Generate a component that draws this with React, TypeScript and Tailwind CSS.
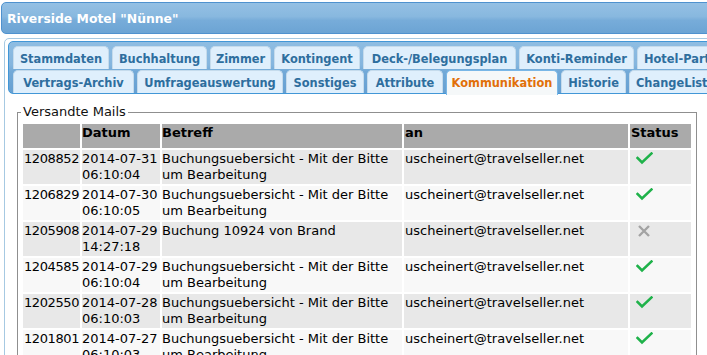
import React from 'react'

const row1 = [
  { label: 'Stammdaten', w: 'w-[96px]' },
  { label: 'Buchhaltung', w: 'w-[95px]' },
  { label: 'Zimmer', w: 'w-[61px]' },
  { label: 'Kontingent', w: 'w-[86px]' },
  { label: 'Deck-/Belegungsplan', w: 'w-[153px]' },
  { label: 'Konti-Reminder', w: 'w-[115px]' },
  { label: 'Hotel-Partner', w: 'w-[110px]', cut: true },
]

const row2 = [
  { label: 'Vertrags-Archiv', w: 'w-[121px]' },
  { label: 'Umfrageauswertung', w: 'w-[146px]' },
  { label: 'Sonstiges', w: 'w-[78px]' },
  { label: 'Attribute', w: 'w-[76px]' },
  { label: 'Kommunikation', w: 'w-[112px]', active: true },
  { label: 'Historie', w: 'w-[65px]' },
  { label: 'ChangeList', w: 'w-[90px]', cut: true },
]

const mails = [
  { id: '1208852', date: '2014-07-31', time: '06:10:04', subject: 'Buchungsuebersicht - Mit der Bitte um Bearbeitung', ok: true },
  { id: '1206829', date: '2014-07-30', time: '06:10:05', subject: 'Buchungsuebersicht - Mit der Bitte um Bearbeitung', ok: true },
  { id: '1205908', date: '2014-07-29', time: '14:27:18', subject: 'Buchung 10924 von Brand', ok: false },
  { id: '1204585', date: '2014-07-29', time: '06:10:04', subject: 'Buchungsuebersicht - Mit der Bitte um Bearbeitung', ok: true },
  { id: '1202550', date: '2014-07-28', time: '06:10:03', subject: 'Buchungsuebersicht - Mit der Bitte um Bearbeitung', ok: true },
  { id: '1201801', date: '2014-07-27', time: '06:10:03', subject: 'Buchungsuebersicht - Mit der Bitte um Bearbeitung', ok: true },
]

function Tab({ label, w, active, cut }: { label: string; w: string; active?: boolean; cut?: boolean }) {
  if (active) {
    return (
      <div
        className={`${w} h-[25px] -mb-[1px] relative z-10 shrink-0 flex justify-center pt-[5px] leading-[14px] rounded-t-[5px] border border-b-0 border-[#79b7e7] bg-[#f5f8f9] text-[#e17009]`}
      >
        {label}
      </div>
    )
  }
  return (
    <div
      className={`${w} h-[23px] shrink-0 flex ${cut ? 'justify-start pl-[6px]' : 'justify-center'} pt-[5px] leading-[14px] rounded-t-[5px] border border-b-0 border-[#c5dbec] bg-[#dfeffc] text-[#2e6e9e] whitespace-nowrap overflow-hidden`}
    >
      {label}
    </div>
  )
}

function Check() {
  return (
    <svg width="17" height="13" viewBox="0 0 17 13" className="ml-[6px] mt-[1px]">
      <polyline points="1.5,6 6,10.5 15.5,1.5" fill="none" stroke="#1fb24a" strokeWidth="2.6" strokeLinecap="square" />
    </svg>
  )
}

function Cross() {
  return (
    <svg width="14" height="14" viewBox="0 0 14 14" className="ml-[7px] mt-[1px]">
      <path d="M2 2 L12 12 M12 2 L2 12" fill="none" stroke="#a3a3a3" strokeWidth="2.4" />
    </svg>
  )
}

export default function App() {
  return (
    <div className="w-[707px] h-[355px] overflow-hidden bg-white font-['DejaVu_Sans',Verdana,sans-serif]">
      {/* title bar */}
      <div className="pt-[2px] pl-[1px]">
        <div className="w-[760px] h-[32px] rounded-[5px] border border-[#4f92cf] bg-[linear-gradient(180deg,#94c0e4_0%,#88b8df_45%,#77acd9_58%,#6ca4d4_100%)] flex items-center pl-[5px] pt-[2px] text-white font-bold text-[12.4px]">
          Riverside Motel "Nünne"
        </div>
      </div>

      {/* tabs panel */}
      <div className="ml-[4px] mt-[4px] w-[760px] rounded-[5px] border border-[#a6c9e2] bg-white pt-[2px] px-[3px]">
        <div className="rounded-[5px] border border-[#4297d7] bg-[linear-gradient(180deg,#8fbde2_0%,#84b5de_45%,#72a9d7_58%,#66a0d2_100%)] pl-[4px] pt-[4px] font-bold text-[11.4px]">
          <div className="flex gap-[3px] items-start">
            {row1.map((t) => (
              <Tab key={t.label} {...t} />
            ))}
          </div>
          <div className="flex gap-[3px] items-start mt-[1px] -mb-[1px] h-[24px]">
            {row2.map((t) => (
              <Tab key={t.label} {...t} />
            ))}
          </div>
        </div>

        {/* content */}
        <fieldset className="ml-[9px] mt-[10px] w-[680px] border border-[#8f8f8f] px-[3px] pt-[2px] pb-[4px] text-[13px] text-black">
          <legend className="px-[2px] leading-[16px] text-[#111]">Versandte Mails</legend>
          <table className="table-fixed w-[672px] border-separate border-spacing-[2px] leading-[16px]">
            <colgroup>
              <col className="w-[57px]" />
              <col className="w-[78px]" />
              <col className="w-[240px]" />
              <col className="w-[224px]" />
              <col className="w-[61px]" />
            </colgroup>
            <thead>
              <tr className="h-[24px] bg-[#aaaaaa] font-bold text-left">
                <th className="align-top pt-[1px]"></th>
                <th className="align-top pt-[1px]">Datum</th>
                <th className="align-top pt-[1px]">Betreff</th>
                <th className="align-top pt-[1px] pl-[1px]">an</th>
                <th className="align-top pt-[1px] pl-[1px]">Status</th>
              </tr>
            </thead>
            <tbody>
              {mails.map((m, i) => (
                <tr key={m.id} className={`h-[34px] ${i % 2 === 0 ? 'bg-[#e8e8e8]' : 'bg-[#f8f8f8]'}`}>
                  <td className="align-top pt-[1px] pl-[1px] tracking-[-0.4px] whitespace-nowrap">{m.id}</td>
                  <td className="align-top pt-[1px]">
                    {m.date} {m.time}
                  </td>
                  <td className="align-top pt-[1px]">{m.subject}</td>
                  <td className="align-top pt-[1px] pl-[1px]">uscheinert@travelseller.net</td>
                  <td className="align-top pt-[1px]">{m.ok ? <Check /> : <Cross />}</td>
                </tr>
              ))}
            </tbody>
          </table>
        </fieldset>
      </div>
    </div>
  )
}
